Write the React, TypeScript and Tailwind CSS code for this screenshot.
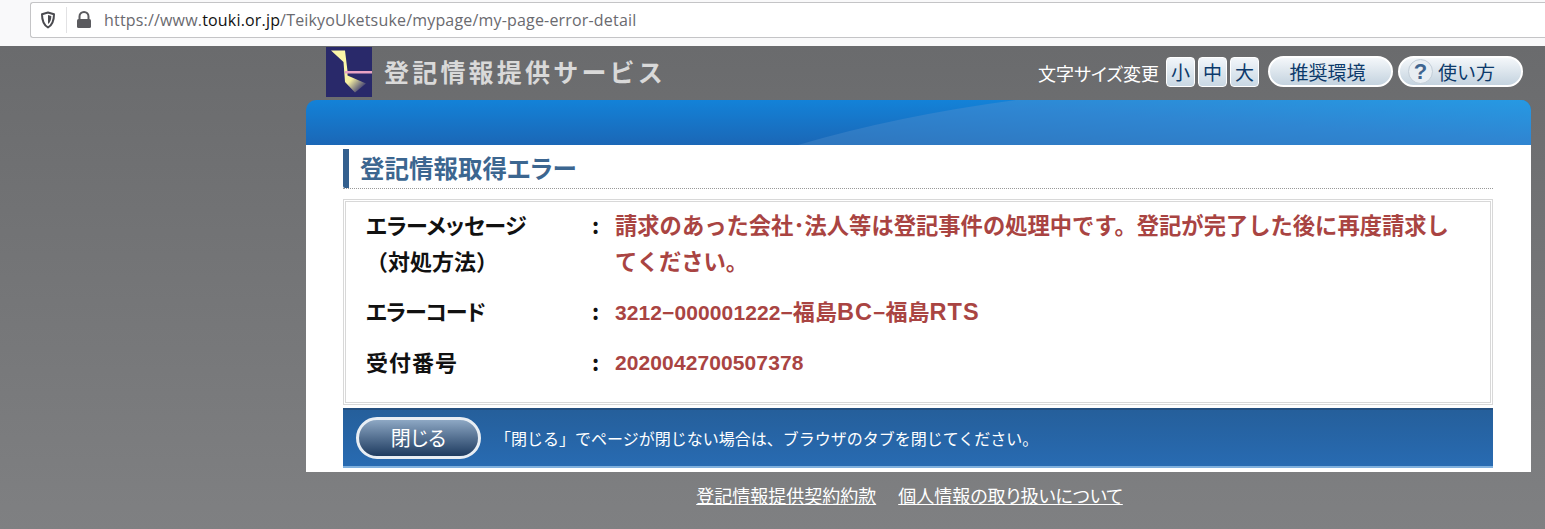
import { Fragment, type ReactNode } from 'react';

const JP = "font-['Noto_Sans_CJK_JP','Noto_Sans',sans-serif]";
const PALT = "[font-feature-settings:'palt']";
// 数字は欧文フォントの方が元の幅に近い
const NUM = "pt-[2px] font-['Liberation_Sans','Noto_Sans_CJK_JP',sans-serif] text-[21px] tracking-[0.1px]";

function Kanji({ children }: { children: ReactNode }) {
  return <span className="text-[22px]">{children}</span>;
}

function Latin({ children }: { children: ReactNode }) {
  return <span className="text-[23.5px] tracking-[1px]">{children}</span>;
}

// 枠内の行データ
const rows: { label: string; labelClass: string; sub?: string; value: ReactNode; valueClass: string; gap: string }[] = [
  {
    label: 'エラーメッセージ',
    labelClass: `${PALT} tracking-[-0.4px]`,
    sub: '（対処方法）',
    value: '請求のあった会社･法人等は登記事件の処理中です。登記が完了した後に再度請求してください。',
    valueClass: 'text-[22.3px]',
    gap: '',
  },
  {
    label: 'エラーコード',
    labelClass: `${PALT} tracking-[-1px]`,
    value: (
      <>
        3212−000001222−<Kanji>福島</Kanji>
        <Latin>BC</Latin>−<Kanji>福島</Kanji>
        <Latin>RTS</Latin>
      </>
    ),
    valueClass: NUM,
    gap: 'mt-[14px]',
  },
  {
    label: '受付番号',
    labelClass: 'tracking-[1px]',
    value: '2020042700507378',
    valueClass: NUM,
    gap: 'mt-[12px]',
  },
];

function Logo() {
  return (
    <svg width="46" height="50" viewBox="0 0 46 50" className="shrink-0">
      <defs>
        <linearGradient id="beam" gradientUnits="userSpaceOnUse" x1="17" y1="26" x2="36" y2="44">
          <stop offset="0" stopColor="#fbf6a8" />
          <stop offset="0.4" stopColor="#f4eea0" />
          <stop offset="1" stopColor="#2f2f6c" />
        </linearGradient>
      </defs>
      <rect width="46" height="50" fill="#29296a" />
      <path d="M5 3.5 L19 3.5 L21.5 24 L21.5 28.5 L40 36.5 L29 45.5 L19 35 L17.5 15 Z" fill="url(#beam)" />
      <rect x="19" y="24" width="27" height="2.5" fill="#e9a3c4" />
    </svg>
  );
}

// 青い帯の模様
function BandArt() {
  return (
    <svg width="1225" height="45" viewBox="0 0 1225 45" className="block">
      <defs>
        <linearGradient id="bandBase" x1="0" y1="0" x2="0" y2="1">
          <stop offset="0" stopColor="#1382d8" />
          <stop offset="1" stopColor="#1b67b6" />
        </linearGradient>
        <linearGradient id="bandSheen" x1="0" y1="1" x2="1" y2="0">
          <stop offset="0" stopColor="#2f76be" />
          <stop offset="0.55" stopColor="#2f86d2" />
          <stop offset="1" stopColor="#2699e3" />
        </linearGradient>
      </defs>
      <rect width="1225" height="45" fill="url(#bandBase)" />
      <path d="M492 45 Q590 16 710 0 L1225 0 L1225 45 Z" fill="url(#bandSheen)" />
    </svg>
  );
}

function SizeButton({ label }: { label: string }) {
  return (
    <div className="flex h-[30px] w-[29px] items-center justify-center rounded-[4px] border border-white bg-gradient-to-b from-[#f2f6fa] to-[#c9d8e4] text-[19px] leading-none text-[#0c3a6b]">
      {label}
    </div>
  );
}

export default function App() {
  return (
    <div className={`${JP} flex h-[529px] w-[1545px] flex-col overflow-hidden bg-gradient-to-b from-[#68696b] to-[#7f8082]`}>
      {/* ブラウザのアドレスバー */}
      <div className="flex h-[46px] shrink-0 items-start bg-[#f9f9fa] pl-[30px] pt-[2px]">
        <div className="flex h-[36px] flex-1 items-center rounded-l-[3px] border border-r-0 border-[#c4c4c6] bg-white pl-[9px]">
          <svg width="16" height="18" viewBox="0 0 16 18" fill="none" className="shrink-0">
            <path d="M8 1.5 L14 3.2 C14 9 13 13.5 8 16.5 C3 13.5 2 9 2 3.2 Z" stroke="#4a4a4f" strokeWidth="2" strokeLinejoin="round" />
            <path d="M8 4 L11.3 5 C11.3 8.5 10.6 11 8 13 Z" fill="#4a4a4f" />
          </svg>
          <div className="ml-[10px] h-[26px] w-px bg-[#e2e2e4]" />
          <svg width="16" height="18" viewBox="0 0 16 18" className="ml-[9px] shrink-0">
            <path d="M3.5 8 V5.5 a4.5 4.5 0 0 1 9 0 V8" fill="none" stroke="#5b5b5f" strokeWidth="2" />
            <rect x="1" y="8" width="14" height="9" rx="1.5" fill="#5b5b5f" />
          </svg>
          <span className="ml-[12px] font-['Open_Sans',sans-serif] text-[16px] tracking-[0.18px] text-[#6a6a6f]">
            https://www.<span className="text-[#111]">touki.or.jp</span>/TeikyoUketsuke/mypage/my-page-error-detail
          </span>
        </div>
      </div>

      <div className="ml-[306px] flex w-[1225px] flex-col">
        {/* ヘッダー */}
        <div className="flex h-[54px] items-start pl-[20px] pr-[8px] pt-px">
          <Logo />
          <span className="ml-[12px] mt-[6px] text-[25px] font-bold leading-[36px] tracking-[3.2px] text-[#d9d9d9]">登記情報提供サービス</span>
          <div className="ml-auto mt-[9px] flex items-center gap-[3px]">
            <span className={`mr-[4px] mt-[3px] text-[18px] text-white ${PALT}`}>文字サイズ変更</span>
            <SizeButton label="小" />
            <SizeButton label="中" />
            <SizeButton label="大" />
            <div className="ml-[6px] flex gap-[5px]">
              <div className="flex h-[31px] w-[125px] items-center justify-center rounded-full border-2 border-white bg-gradient-to-b from-[#f4f7fa] to-[#c4d3df] pr-[6px] text-[19px] leading-none text-[#0c3a6b]">
                推奨環境
              </div>
              <div className="flex h-[31px] w-[125px] items-center rounded-full border-2 border-white bg-gradient-to-b from-[#f4f7fa] to-[#c4d3df] pl-[8px] text-[19px] leading-none text-[#0c3a6b]">
                <span className="mr-[5px] flex h-[25px] w-[25px] items-center justify-center rounded-full border border-[#c3ced8] bg-[#e8eef3] font-['Liberation_Sans',sans-serif] text-[22px] font-bold text-[#3f6590]">?</span>
                使い方
              </div>
            </div>
          </div>
        </div>

        {/* 青い帯 */}
        <div className="h-[45px] overflow-hidden rounded-t-[10px]">
          <BandArt />
        </div>

        {/* 本文 */}
        <div className="flex h-[327px] flex-col bg-white pl-[37px] pr-[38px] pt-[4px]">
          <div className="flex h-[40px] items-center border-b border-dotted border-[#999]">
            <div className="h-[39px] w-[6px] rounded-bl-[2px] bg-[#34608f]" />
            <h1 className={`ml-[11px] text-[24.5px] font-bold text-[#3c6690] ${PALT}`}>登記情報取得エラー</h1>
          </div>

          <div className="mt-[10px] h-[206px] border-[3px] border-double border-[#d8d8d8] pl-[20px] pr-[36px] pt-[4px]">
            <div className="grid grid-cols-[226px_23px_1fr] text-[22px] font-bold leading-[36px]">
              {rows.map((row) => (
                <Fragment key={row.label}>
                  <div className={`text-[#111] ${row.gap}`}>
                    <div className={row.labelClass}>{row.label}</div>
                    {row.sub && <div>{row.sub}</div>}
                  </div>
                  <div className={`text-[#111] ${row.gap}`}>:</div>
                  <div className={`text-[#a94442] ${row.valueClass} ${row.gap}`}>{row.value}</div>
                </Fragment>
              ))}
            </div>
          </div>

          <div className="mt-[3px] flex h-[60px] items-center border-b-2 border-t-2 border-b-[#7fb0de] border-t-[#255080] bg-gradient-to-b from-[#255f9b] to-[#286bb2] pl-[13px]">
            <div className={`flex h-[42px] w-[125px] items-center justify-center rounded-full border-[3px] border-[#e8eef4] bg-gradient-to-b from-[#8ea8c4] to-[#1f3c60] text-[20px] text-white ${PALT}`}>
              閉じる
            </div>
            <span className="ml-[14px] text-[16px] text-white">「閉じる」でページが閉じない場合は、ブラウザのタブを閉じてください。</span>
          </div>
        </div>

        {/* フッターリンク */}
        <div className={`mt-[10px] flex justify-center gap-[22px] pr-[18px] text-[18px] text-white underline ${PALT}`}>
          <span>登記情報提供契約約款</span>
          <span>個人情報の取り扱いについて</span>
        </div>
      </div>
    </div>
  );
}
